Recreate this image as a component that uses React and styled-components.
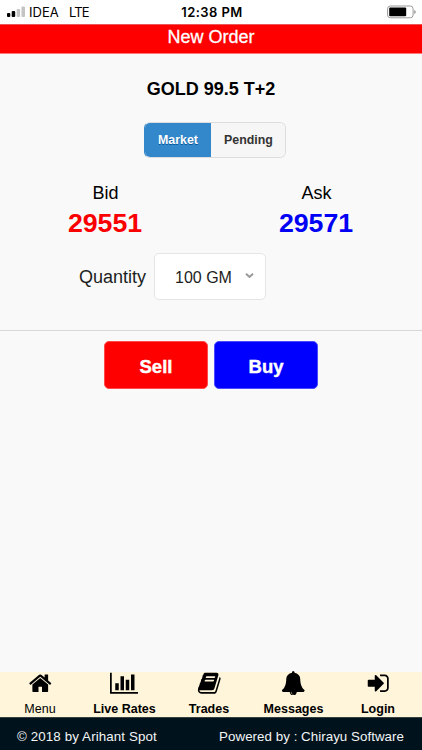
import React from "react";
import styled, { createGlobalStyle } from "styled-components";

const Global = createGlobalStyle`
  * { box-sizing: border-box; }
  body { margin: 0; background: #f9f9f9; font-family: "Liberation Sans", Arial, sans-serif; color: #000; }
  button { font-family: inherit; margin: 0; padding: 0; }
`;

const Screen = styled.div`
  width: 422px;
  height: 750px;
  display: flex;
  flex-direction: column;
  overflow: hidden;
  white-space: nowrap;
`;

const StatusBar = styled.div`
  height: 24px;
  background: #fff;
  display: grid;
  grid-template-columns: 1fr auto 1fr;
  align-items: center;
  padding: 0 6px 1px 7px;
  font-family: Inter, "Liberation Sans", sans-serif;
  font-size: 13px;
  line-height: 22px;
`;

const Carrier = styled.div`
  display: flex;
  align-items: center;
`;

const Signal = styled.svg`
  width: 19px;
  height: 12px;
  margin-right: 3px;
`;

const CarrierName = styled.span`
  width: 40px;
  font-size: 13px;
  letter-spacing: 0.05px;
`;

const Network = styled.span`
  font-size: 13px;
  letter-spacing: -0.9px;
`;

const Clock = styled.span`
  font-size: 13px;
  font-weight: 600;
  letter-spacing: 0.45px;
  padding-left: 1px;
`;

const Battery = styled.svg`
  justify-self: end;
  width: 29px;
  height: 14px;
`;

const TitleBar = styled.header`
  height: 30px;
  background: #fe0000;
  border-top: 1px solid #ee5555;
  border-bottom: 1px solid #ff7777;
  color: #fff;
  text-align: center;
  font-size: 18px;
  line-height: 24px;
  -webkit-text-stroke: 0.3px #fff;
`;

const Content = styled.main`
  flex: 1;
  background: #f9f9f9;
`;

const Symbol = styled.h1`
  margin: 24px 0 0;
  font-size: 18px;
  line-height: 22px;
  letter-spacing: -0.02px;
  text-align: center;
`;

const Tabs = styled.div`
  display: flex;
  width: 142px;
  height: 36px;
  margin: 22px auto 0 144px;
  border-radius: 6px;
  overflow: hidden;
  border: 1px solid #ddd;
  border-left-color: #3388cc;
`;

const Tab = styled.button`
  width: ${(p) => (p.$active ? 66 : 74)}px;
  height: 36px;
  margin-top: -1px;
  padding-left: ${(p) => (p.$active ? 0 : 1)}px;
  border: 0;
  border-top: 1px solid ${(p) => (p.$active ? "#3388cc" : "#ddd")};
  border-bottom: 1px solid ${(p) => (p.$active ? "#3388cc" : "#ddd")};
  background: ${(p) => (p.$active ? "#3388cc" : "#f6f6f6")};
  color: ${(p) => (p.$active ? "#fff" : "#333")};
  text-shadow: 0 1px 0 ${(p) => (p.$active ? "#005599" : "#f3f3f3")};
  font-size: 12.4px;
  font-weight: bold;
`;

const Prices = styled.section`
  display: grid;
  grid-template-columns: 1fr 1fr;
  margin-top: 24px;
  text-align: center;
`;

const Label = styled.div`
  font-size: 18px;
  line-height: 22px;
`;

const Price = styled.div`
  color: ${(p) => p.$color};
  font-size: 26.7px;
  font-weight: bold;
  line-height: 30px;
  margin: 4px 0 1px;
  padding-right: 1px;
`;

const QuantityRow = styled.section`
  display: flex;
  align-items: center;
  gap: 8px;
  margin: 14px 0 0 79px;
  color: #1c1e22;
`;

const QuantityLabel = styled.label`
  font-size: 18px;
  width: 67px;
  line-height: 24px;
  padding-top: 1px;
`;

const Select = styled.button`
  width: 112px;
  height: 47px;
  display: flex;
  align-items: center;
  padding: 2px 0 0 20px;
  border: 1px solid #e5e5e5;
  border-radius: 5px;
  background: #fff;
  color: #1c1e22;
  font-size: 16px;
`;

const Chevron = styled.svg`
  width: 9px;
  height: 7px;
  margin: -4px 0 0 13px;
`;

const Actions = styled.section`
  display: flex;
  justify-content: center;
  gap: 6px;
  margin-top: 30px;
  padding-top: 10px;
  border-top: 1.5px solid #d8d8d8;
`;

const Action = styled.button`
  width: 104px;
  height: 48px;
  border: 1px solid ${(p) => p.$edge};
  border-radius: 5px;
  background: ${(p) => p.$color};
  color: #fff;
  font-size: 18.5px;
  font-weight: bold;
  line-height: 46px;
  padding-top: 2px;
  -webkit-text-stroke: 0.4px #fff;
`;

const Nav = styled.nav`
  height: 45px;
  display: grid;
  grid-template-columns: 80px 89px 80px 89px 80px;
  background: #fff5da;
`;

const NavItem = styled.a`
  display: flex;
  flex-direction: column;
  align-items: center;
  color: #000;
  font-size: 12.5px;
  font-weight: ${(p) => (p.$plain ? "normal" : "bold")};
  line-height: 15px;
`;

const NavIcon = styled.svg`
  width: ${(p) => (p.$wide ? 28 : 24.5)}px;
  height: 24.5px;
  margin-top: -1.5px;
  margin-bottom: 7px;
  margin-right: ${(p) => (p.$wide ? 1 : 0)}px;
  fill: #000;
`;

const Footer = styled.footer`
  height: 33px;
  display: flex;
  justify-content: space-between;
  padding: 0 18px 0 17px;
  border-top: 1px solid #34403f;
  background: #00121c;
  color: #f3f5f6;
  font-size: 13.33px;
  line-height: 37px;
`;

const Copyright = styled.span`
  letter-spacing: 0.12px;
`;

const Credit = styled.span`
  letter-spacing: 0.04px;
`;

const items = [
  {
    label: "Menu",
    plain: true,
    d: "M1472 992v480q0 26-19 45t-45 19h-384v-384h-256v384h-384q-26 0-45-19t-19-45v-480q0-1 .5-3t.5-3l575-474 575 474q1 2 1 6zm223-69l-62 74q-8 9-21 11h-3q-13 0-21-7l-692-577-692 577q-12 8-24 7-13-2-21-11l-62-74q-8-10-7-23.5t11-21.5l719-599q32-26 76-26t76 26l244 204v-195q0-14 9-23t23-9h192q14 0 23 9t9 23v408l219 182q10 8 11 21.5t-7 23.5z",
  },
  {
    label: "Live Rates",
    wide: true,
    d: "M640 896v512h-256v-512h256zm384-512v1024h-256v-1024h256zm1024 1152v128h-2048v-1536h128v1408h1920zm-640-896v768h-256v-768h256zm384-384v1152h-256v-1152h256z",
  },
  {
    label: "Trades",
    d: "M1703 478q40 57 18 129l-275 906q-19 64-76.5 107.5t-122.5 43.5h-923q-77 0-148.5-53.5t-99.5-131.5q-24-67-2-127 0-4 3-27t4-37q1-8-3-21.5t-3-19.5q2-11 8-21t16.5-23.5 16.5-23.5q23-38 45-91.5t30-91.5q3-10 .5-30t-.5-28q3-11 17-28t17-23q21-36 42-92t25-90q1-9-2.5-32t.5-28q4-13 22-30.5t22-22.5q19-26 42.5-84.5t27.5-96.5q1-8-3-25.5t-2-26.5q2-8 9-18t18-23 17-21q8-12 16.5-30.5t15-35 16-36 19.5-32 26.5-23.5 36-11.5 47.5 5.5l-1 3q38-9 51-9h761q74 0 114 56t18 130l-274 906q-36 119-71.5 153.5t-128.5 34.5h-869q-27 0-38 15-11 16-1 43 24 70 144 70h923q29 0 56-15.5t35-41.5l300-987q7-22 5-57 38 15 59 43zm-1064 2q-4 13 2 22.5t20 9.5h608q13 0 25.5-9.5t16.5-22.5l21-64q4-13-2-22.5t-20-9.5h-608q-13 0-25.5 9.5t-16.5 22.5zm-83 256q-4 13 2 22.5t20 9.5h608q13 0 25.5-9.5t16.5-22.5l21-64q4-13-2-22.5t-20-9.5h-608q-13 0-25.5 9.5t-16.5 22.5z",
  },
  {
    label: "Messages",
    d: "M912 1696q0-16-16-16-59 0-101.5-42.5t-42.5-101.5q0-16-16-16t-16 16q0 73 51.5 124.5t124.5 51.5q16 0 16-16zm816-288q0 52-38 90t-90 38h-448q0 106-75 181t-181 75-181-75-75-181h-448q-52 0-90-38t-38-90q50-42 91-88t85-119.5 74.5-158.5 50-206 19.5-260q0-152 117-282.5t307-158.5q-8-19-8-39 0-40 28-68t68-28 68 28 28 68q0 20-8 39 190 28 307 158.5t117 282.5q0 139 19.5 260t50 206 74.5 158.5 85 119.5 91 88z",
  },
  {
    label: "Login",
    d: "M1312 896q0 26-19 45l-544 544q-19 19-45 19t-45-19-19-45v-288h-448q-26 0-45-19t-19-45v-384q0-26 19-45t45-19h448v-288q0-26 19-45t45-19 45 19l544 544q19 19 19 45zm352-352v704q0 119-84.5 203.5t-203.5 84.5h-320q-13 0-22.5-9.5t-9.5-22.5q0-4-1-20t-.5-26.5 3-23.5 10-19.5 20.5-6.5h320q66 0 113-47t47-113v-704q0-66-47-113t-113-47h-312l-11.5-1-11.5-3-8-5.5-7-9-2-13.5q0-4-1-20t-.5-26.5 3-23.5 10-19.5 20.5-6.5h320q119 0 203.5 84.5t84.5 203.5z",
  },
];

export default function App() {
  return (
    <Screen>
      <Global />
      <StatusBar>
        <Carrier>
          <Signal viewBox="0 0 19 12">
            <rect x="0" y="7" width="3.3" height="4" rx="1" />
            <rect x="4.7" y="5" width="3.5" height="6" rx="1" />
            <rect x="9.7" y="3" width="3.4" height="8" rx="1" fill="#c4c4c4" />
            <rect x="14.5" y="0.5" width="3.5" height="10.5" rx="1" fill="#c4c4c4" />
          </Signal>
          <CarrierName>IDEA</CarrierName>
          <Network>LTE</Network>
        </Carrier>
        <Clock>12:38 PM</Clock>
        <Battery viewBox="0 0 29 14">
          <rect x="0.6" y="1" width="25.5" height="11.8" rx="2.8" fill="none" stroke="#999" />
          <rect x="2.2" y="2.6" width="17" height="8.6" rx="1" />
          <path d="M27.2 5v4q1.6-.6 1.6-2t-1.6-2z" fill="#999" />
        </Battery>
      </StatusBar>
      <TitleBar>New Order</TitleBar>
      <Content>
        <Symbol>GOLD 99.5 T+2</Symbol>
        <Tabs>
          <Tab $active>Market</Tab>
          <Tab>Pending</Tab>
        </Tabs>
        <Prices>
          <div>
            <Label>Bid</Label>
            <Price $color="#fa0000">29551</Price>
          </div>
          <div>
            <Label>Ask</Label>
            <Price $color="#0000f5">29571</Price>
          </div>
        </Prices>
        <QuantityRow>
          <QuantityLabel>Quantity</QuantityLabel>
          <Select>
            100 GM
            <Chevron viewBox="0 0 9 7">
              <path d="M1 1.7l3.5 3.3L8 1.7" fill="none" stroke="#999" strokeWidth="2" />
            </Chevron>
          </Select>
        </QuantityRow>
        <Actions>
          <Action $color="#ff0000" $edge="#ff4a4a">Sell</Action>
          <Action $color="#0000ff" $edge="#4a4aff">Buy</Action>
        </Actions>
      </Content>
      <Nav>
        {items.map((item) => (
          <NavItem key={item.label} $plain={item.plain}>
            <NavIcon $wide={item.wide} viewBox={item.wide ? "0 0 2048 1792" : "0 0 1792 1792"}>
              <path d={item.d} />
            </NavIcon>
            {item.label}
          </NavItem>
        ))}
      </Nav>
      <Footer>
        <Copyright>© 2018 by Arihant Spot</Copyright>
        <Credit>Powered by : Chirayu Software</Credit>
      </Footer>
    </Screen>
  );
}
